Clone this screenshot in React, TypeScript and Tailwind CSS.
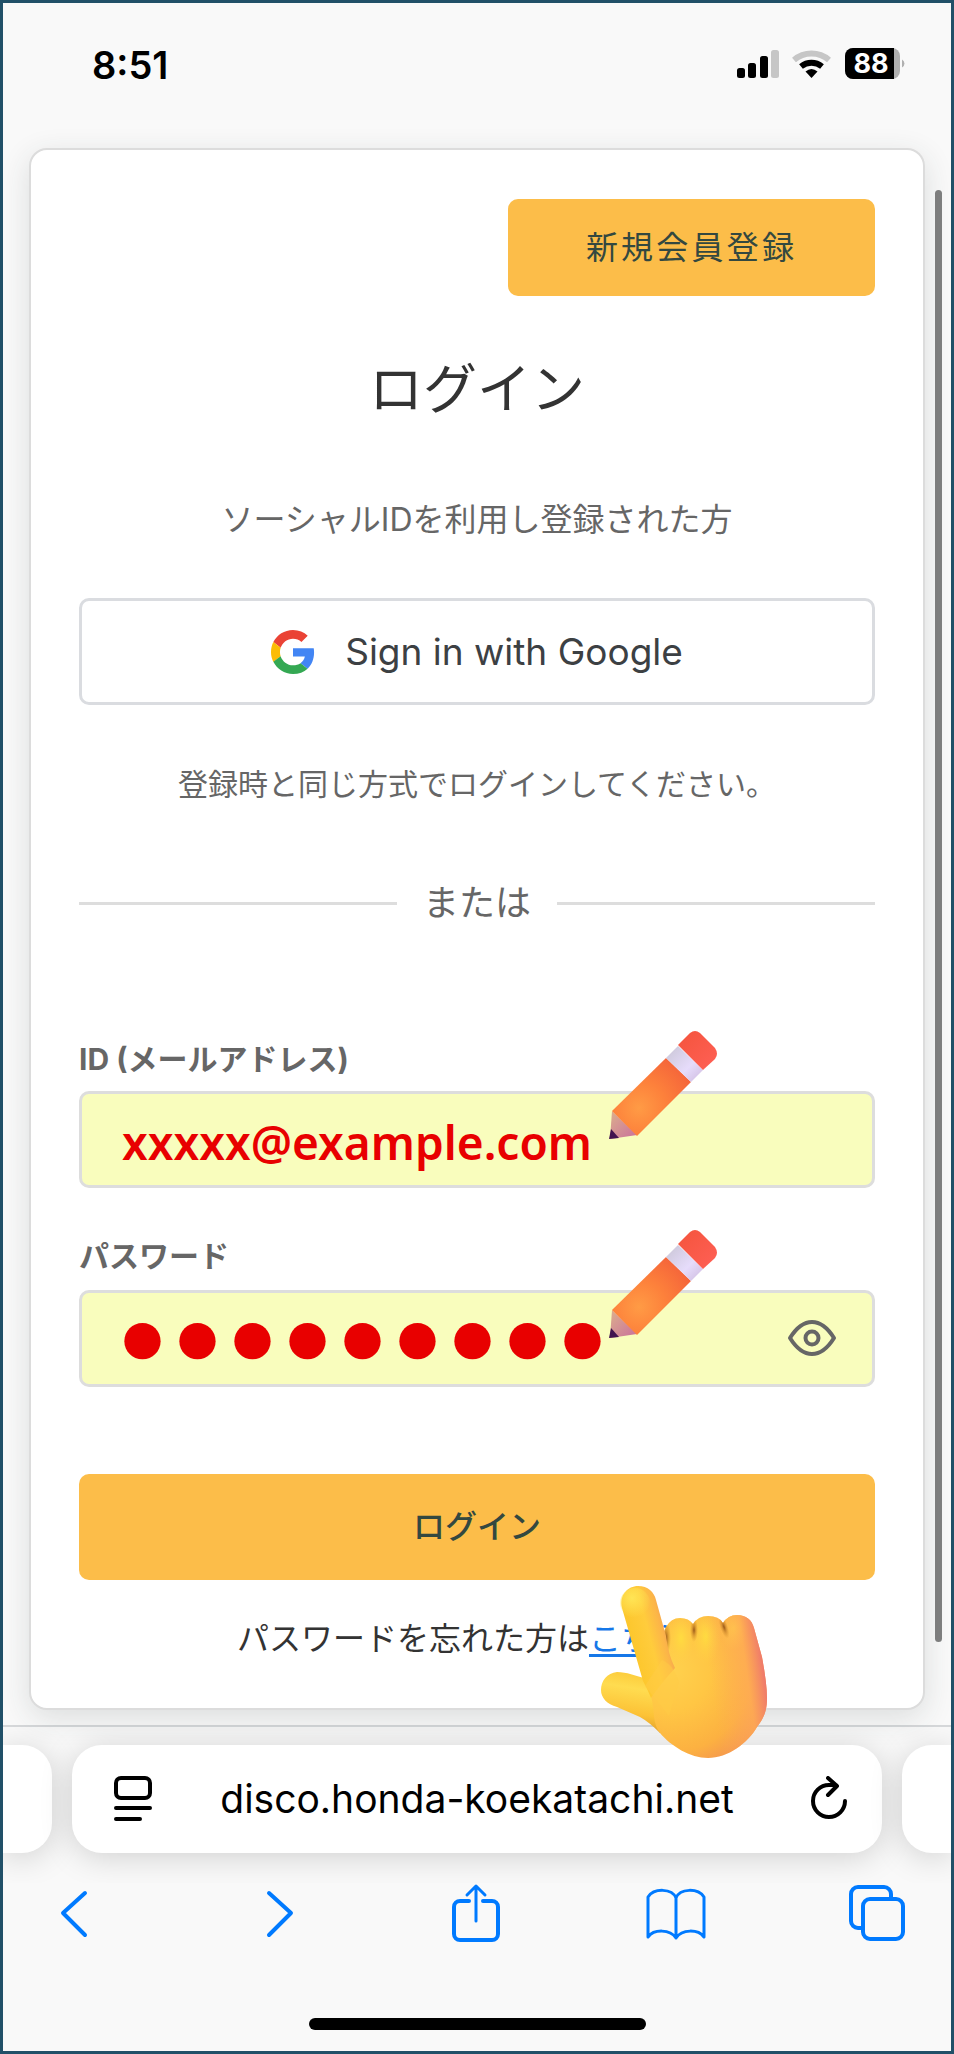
import { useState } from "react";

const jp = "font-['Inter','Noto_Sans_CJK_JP',sans-serif]";

function StatusIcons() {
  return (
    <svg width="170" height="32" viewBox="0 0 170 32" aria-hidden="true">
      <rect x="0" y="20" width="8" height="10" rx="2.500" />
      <rect x="11" y="15" width="8" height="15" rx="2.500" />
      <rect x="23" y="8" width="8" height="22" rx="2.500" />
      <rect x="34" y="2" width="8" height="28" rx="2.500" fill="#c6c6c6" />
      <path d="M57 12a27 27 0 0 1 35 0" fill="none" stroke="#c6c6c6" strokeWidth="6" />
      <path d="M64 18.500a17 17 0 0 1 21 0" fill="none" stroke="#000" strokeWidth="6" />
      <path d="M74.500 30l-6-6.500q6-5 12 0z" />
      <rect x="108" y="0" width="55" height="31" rx="8" fill="#b0b0b0" />
      <path d="M116 0h41v31h-41a8 8 0 0 1-8-8V8a8 8 0 0 1 8-8z" />
      <path d="M165 11.500a4.500 4.500 0 0 1 0 8z" fill="#b0b0b0" />
      <text x="134" y="25" textAnchor="middle" fill="#fff" fontSize="27" fontWeight="700" fontFamily="Inter">
        88
      </text>
    </svg>
  );
}

function GoogleLogo() {
  return (
    <svg width="44" height="44" viewBox="0 0 48 48" aria-hidden="true">
      <path fill="#EA4335" d="M24 9.500c3.540 0 6.710 1.220 9.210 3.600l6.850-6.850C35.900 2.380 30.470 0 24 0 14.620 0 6.510 5.380 2.560 13.220l7.980 6.190C12.430 13.720 17.740 9.500 24 9.500z" />
      <path fill="#4285F4" d="M46.980 24.550c0-1.570-.15-3.090-.38-4.550H24v9.020h12.940c-.58 2.960-2.260 5.480-4.780 7.180l7.730 6c4.510-4.180 7.090-10.360 7.090-17.650z" />
      <path fill="#FBBC05" d="M10.530 28.590c-.48-1.450-.76-2.990-.76-4.590s.27-3.140.76-4.590l-7.980-6.190C.92 16.460 0 20.120 0 24s.92 7.540 2.560 10.780l7.970-6.190z" />
      <path fill="#34A853" d="M24 48c6.480 0 11.930-2.130 15.890-5.810l-7.730-6c-2.150 1.450-4.920 2.300-8.160 2.300-6.260 0-11.570-4.220-13.470-9.910l-7.980 6.190C6.510 42.620 14.620 48 24 48z" />
    </svg>
  );
}

function Pencil() {
  return (
    <svg
      className="pointer-events-none absolute right-[156px] bottom-[48px]"
      width="110"
      height="110"
      viewBox="0 0 110 110"
      aria-hidden="true"
    >
      <defs>
        <radialGradient id="wood" gradientUnits="userSpaceOnUse" cx="30" cy="78" r="60">
          <stop offset="0" stopColor="#ff9b45" />
          <stop offset="0.450" stopColor="#fd813b" />
          <stop offset="1" stopColor="#f4623a" />
        </radialGradient>
        <linearGradient id="tip" x1="0" y1="0" x2="1" y2="1">
          <stop offset="0" stopColor="#dcb08c" />
          <stop offset="1" stopColor="#c96f9c" />
        </linearGradient>
        <linearGradient id="band" x1="0" y1="0" x2="1" y2="1">
          <stop offset="0" stopColor="#c9c5d4" />
          <stop offset="0.600" stopColor="#e6dcfb" />
          <stop offset="1" stopColor="#cdb9de" />
        </linearGradient>
        <linearGradient id="rubber" x1="0" y1="0" x2="1" y2="1">
          <stop offset="0" stopColor="#f4543c" />
          <stop offset="1" stopColor="#ff6056" />
        </linearGradient>
      </defs>
      <path d="M3 81 28 105 1 109Z" fill="url(#tip)" />
      <path d="M2 99 10 108 0 109Z" fill="#41134f" />
      <path d="M57 28 82 52 28 106 3 81Z" fill="url(#wood)" />
      <path d="M57 28 69 16 94 40 82 52Z" fill="url(#band)" />
      <path d="M69 15 81 3Q86-1 91 3L106 18Q110 24 106 29L94 40Z" fill="url(#rubber)" />
    </svg>
  );
}

function PointingHand() {
  return (
    <svg
      className="pointer-events-none absolute right-[155px] -bottom-[51px]"
      width="167"
      height="173"
      viewBox="0 0 167 173"
      aria-hidden="true"
    >
      <defs>
        <linearGradient id="finger" gradientUnits="userSpaceOnUse" x1="24" y1="42" x2="66" y2="31">
          <stop offset="0" stopColor="#fcc62b" />
          <stop offset="0.500" stopColor="#ffcc3c" />
          <stop offset="0.800" stopColor="#fcb548" />
          <stop offset="1" stopColor="#f09b55" />
        </linearGradient>
        <radialGradient id="fingertip" gradientUnits="userSpaceOnUse" cx="31" cy="12" r="20">
          <stop offset="0" stopColor="#ffe555" />
          <stop offset="1" stopColor="#ffe555" stopOpacity="0" />
        </radialGradient>
        <linearGradient id="thumb" x1="0.400" y1="0" x2="0.200" y2="1">
          <stop offset="0" stopColor="#fccb3a" />
          <stop offset="0.250" stopColor="#ffdc50" />
          <stop offset="0.650" stopColor="#fcc236" />
          <stop offset="1" stopColor="#d9942b" />
        </linearGradient>
        <radialGradient id="palm" gradientUnits="userSpaceOnUse" cx="68" cy="84" r="118">
          <stop offset="0" stopColor="#ffd24e" />
          <stop offset="0.350" stopColor="#ffc644" />
          <stop offset="0.700" stopColor="#fcb141" />
          <stop offset="0.900" stopColor="#f4964f" />
          <stop offset="1" stopColor="#e5805c" />
        </radialGradient>
        <radialGradient id="knuckle">
          <stop offset="0" stopColor="#ffdc40" />
          <stop offset="1" stopColor="#ffd045" stopOpacity="0" />
        </radialGradient>
        <radialGradient id="crease">
          <stop offset="0" stopColor="#8a4a14" stopOpacity="0.900" />
          <stop offset="0.500" stopColor="#c07a22" stopOpacity="0.500" />
          <stop offset="1" stopColor="#d08a2a" stopOpacity="0" />
        </radialGradient>
        <linearGradient id="rim" gradientUnits="userSpaceOnUse" x1="110" y1="96" x2="166" y2="88">
          <stop offset="0" stopColor="#ffad57" stopOpacity="0" />
          <stop offset="0.650" stopColor="#ffaa58" stopOpacity="0.700" />
          <stop offset="1" stopColor="#ec7070" />
        </linearGradient>
        <clipPath id="fist">
          <path d="M42 92 65 41Q70 32 79 32Q88 32 92 38Q97 30 107 30Q118 30 122 37Q127 29 136 29C145 29 151 34 153 42L161 71Q166 98 166 112C166 125 163 132 156 141C147 157 127 172 107 172C89 172 70 160 59 147C48 132 58 118 42 92Z" />
        </clipPath>
      </defs>
      <path d="M44 92C34 90 26 86 16 86C6 87 0 95 0 104C0 112 6 118 16 121L39 131Q48 136 59 147L76 120Z" fill="url(#thumb)" />
      <g clipPath="url(#fist)">
        <rect width="167" height="173" fill="url(#palm)" />
        <ellipse cx="80" cy="52" rx="13" ry="26" fill="url(#knuckle)" />
        <ellipse cx="105" cy="50" rx="15" ry="28" fill="url(#knuckle)" />
        <ellipse cx="133" cy="42" rx="14" ry="22" fill="url(#knuckle)" />
        <path d="M100 28H167V173H100Z" fill="url(#rim)" />
        <ellipse cx="65" cy="52" rx="5" ry="17" fill="url(#crease)" />
        <ellipse cx="93" cy="44" rx="4" ry="12" fill="url(#crease)" />
        <ellipse cx="123" cy="41" rx="4" ry="12" fill="url(#crease)" transform="rotate(-18 123 41)" />
      </g>
      <path d="M42 95L21 22C18 9 27 0 37 0C47 0 53 6 55 14L65 50Q67 68 74 82Q58 100 50 112Q46 102 42 95Z" fill="url(#finger)" />
      <path d="M61 74Q72 78 78 96L68 130L44 100Z" fill="#ffcb45" opacity="0.500" />
      <circle cx="34" cy="17" r="15" fill="url(#fingertip)" />
    </svg>
  );
}

const iconProps = {
  fill: "none",
  stroke: "currentColor",
  strokeWidth: 4,
  strokeLinecap: "round",
  strokeLinejoin: "round",
} as const;

export default function App() {
  const [email, setEmail] = useState("xxxxx@example.com");
  const [password, setPassword] = useState("password1");
  const [visible, setVisible] = useState(false);

  return (
    <div className={`relative flex min-h-screen flex-col border-3 border-[#215068] bg-[#f9f9f9] text-[#333] ${jp}`}>
      {/* Status bar */}
      <header className="flex h-[145px] items-start justify-between pt-[40px] pr-[44px] pl-[89px] text-black">
        <span className="text-[38px] leading-[44px] font-semibold">8:51</span>
        <div className="pt-[5px]">
          <StatusIcons />
        </div>
      </header>

      {/* Page scrollbar */}
      <div className="absolute top-[187px] right-[9px] h-[1452px] w-[7px] rounded-full bg-[#808080]" />

      {/* Login card */}
      <main className="relative mx-[26px] rounded-[18px] border-2 border-[#dcdcdc] bg-white px-[48px] pt-[49px] pb-[45px] shadow-[0_8px_30px_rgba(40,60,60,0.14)]">
        <div className="flex justify-end">
          <button className="h-[97px] w-[367px] rounded-[10px] bg-[#fcbd49] text-[32px] tracking-widest text-[#334840]">
            新規会員登録
          </button>
        </div>

        <h1 className="mt-[58px] text-center text-[54px] leading-[72px]">ログイン</h1>
        <p className="mt-[70px] text-center text-[32px] leading-[48px] text-[#666]">
          ソーシャルIDを利用し登録された方
        </p>

        <button className="mt-[54px] flex h-[107px] w-full items-center justify-center gap-[30px] rounded-[10px] border-3 border-[#dadce0] text-[37px] text-[#3c4043]">
          <GoogleLogo />
          Sign in with Google
        </button>

        <p className="mt-[55px] text-center text-[30px] leading-[48px] text-[#666]">
          登録時と同じ方式でログインしてください。
        </p>

        <div className="mt-[70px] flex items-center gap-[26px] text-[36px] leading-[50px] text-[#666]">
          <span className="h-[3px] flex-1 bg-[#ddd]" />
          または
          <span className="h-[3px] flex-1 bg-[#ddd]" />
        </div>

        <form onSubmit={(e) => e.preventDefault()}>
          <label htmlFor="email" className="mt-[107px] block text-[30px] leading-[48px] font-bold text-[#666]">
            ID (メールアドレス)
          </label>
          <div className="relative mt-[8px]">
            <input
              id="email"
              type="email"
              value={email}
              onChange={(e) => setEmail(e.target.value)}
              className="block h-[97px] w-full rounded-[10px] border-3 border-[#ddd] bg-[#f9fdbd] px-[40px] pt-1 font-['Noto_Sans',sans-serif] text-[46px] leading-[64px] font-semibold text-[#e80000]"
            />
            <Pencil />
          </div>

          <label htmlFor="password" className="mt-[44px] block text-[30px] leading-[48px] font-bold text-[#666]">
            パスワード
          </label>
          <div className="relative mt-[10px]">
            <input
              id="password"
              type={visible ? "text" : "password"}
              value={password}
              onChange={(e) => setPassword(e.target.value)}
              className="block h-[97px] w-full rounded-[10px] border-3 border-[#ddd] bg-[#f9fdbd] px-[33px] pb-3 text-[116px] leading-[72px] font-bold text-[#e80000]"
            />
            <Pencil />
            <button
              type="button"
              aria-label="パスワードを表示"
              onClick={() => setVisible(!visible)}
              className="absolute top-[28px] right-[38px] text-[#666]"
            >
              <svg width="50" height="40" viewBox="0 0 50 40" {...iconProps}>
                <path d="M3 20Q13 4 25 4T47 20Q37 36 25 36T3 20Z" />
                <circle cx="25" cy="20" r="6.500" />
              </svg>
            </button>
          </div>

          <button className="mt-[87px] h-[106px] w-full rounded-[10px] bg-[#fcbd49] text-[32px] font-medium text-[#334840]">
            ログイン
          </button>
        </form>

        <p className="mt-[35px] text-center text-[32px] leading-[48px]">
          パスワードを忘れた方は
          <a href="#reset" className="text-[#1677e8] underline decoration-3 underline-offset-4">
            こちら
          </a>
          。
        </p>
        <PointingHand />
      </main>

      {/* Browser bottom bar */}
      <footer className="mt-[15px] border-t-2 border-[#d5d7d9] text-[#007aff]">
        <div className="flex gap-[20px] overflow-hidden pt-[18px] pb-[30px] text-black">
          <div className="h-[108px] w-[49px] rounded-r-[30px] bg-white shadow-[0_4px_32px_rgba(0,0,0,0.17)]" />
          <div className="flex h-[108px] flex-1 items-center justify-between rounded-[30px] bg-white pr-[34px] pl-[42px] shadow-[0_4px_32px_rgba(0,0,0,0.17)]">
            <button aria-label="ページメニュー">
              <svg width="38" height="46" viewBox="0 0 38 46" {...iconProps}>
                <rect x="2" y="2" width="34" height="20" rx="5" />
                <path d="M2 32H36M2 43H26" />
              </svg>
            </button>
            <span className="pr-2 text-[39px] leading-[48px]">disco.honda-koekatachi.net</span>
            <button aria-label="再読み込み">
              <svg width="38" height="46" viewBox="0 0 38 46" {...iconProps}>
                <path d="M19 9A16 16 0 1 0 35 25M18 2 27 10 18 19M19 9H26" />
              </svg>
            </button>
          </div>
          <div className="h-[108px] w-[49px] rounded-l-[30px] bg-white shadow-[0_4px_32px_rgba(0,0,0,0.17)]" />
        </div>

        <nav className="flex items-center justify-between pr-[44px] pl-[41px]">
          <button aria-label="戻る" className="flex w-[60px] justify-center">
            <svg width="34" height="60" viewBox="0 0 34 60" {...iconProps}>
              <path d="M28 10 6 30 28 52" />
            </svg>
          </button>
          <button aria-label="進む" className="flex w-[60px] justify-center">
            <svg width="44" height="60" viewBox="0 0 44 60" {...iconProps}>
              <path d="M16 10 38 30 16 52" />
            </svg>
          </button>
          <button aria-label="共有" className="flex w-[60px] justify-center">
            <svg width="48" height="60" viewBox="0 0 48 60" {...iconProps}>
              <path d="M17 18H8a6 6 0 0 0-6 6v27a6 6 0 0 0 6 6h32a6 6 0 0 0 6-6V24a6 6 0 0 0-6-6h-9" />
              <path d="M24 38V3M15 12l9-9 9 9" strokeWidth={3} />
            </svg>
          </button>
          <button aria-label="ブックマーク" className="flex w-[60px] justify-center">
            <svg width="60" height="60" viewBox="0 0 60 60" {...iconProps} strokeWidth={3}>
              <path d="M30 15C26 5 8 5 2 14V54C8 46 24 46 30 55C36 46 52 46 58 54V14C52 5 34 5 30 15V55" />
            </svg>
          </button>
          <button aria-label="タブ" className="flex w-[60px] justify-center">
            <svg width="56" height="60" viewBox="0 0 56 60" {...iconProps}>
              <path d="M14 45H9a7 7 0 0 1-7-7V11a7 7 0 0 1 7-7H35a7 7 0 0 1 7 7v5" />
              <rect x="14" y="16" width="40" height="40" rx="7" />
            </svg>
          </button>
        </nav>

        <div className="mx-auto mt-[75px] mb-[19px] h-[12px] w-[337px] rounded-full bg-black" />
      </footer>
    </div>
  );
}
